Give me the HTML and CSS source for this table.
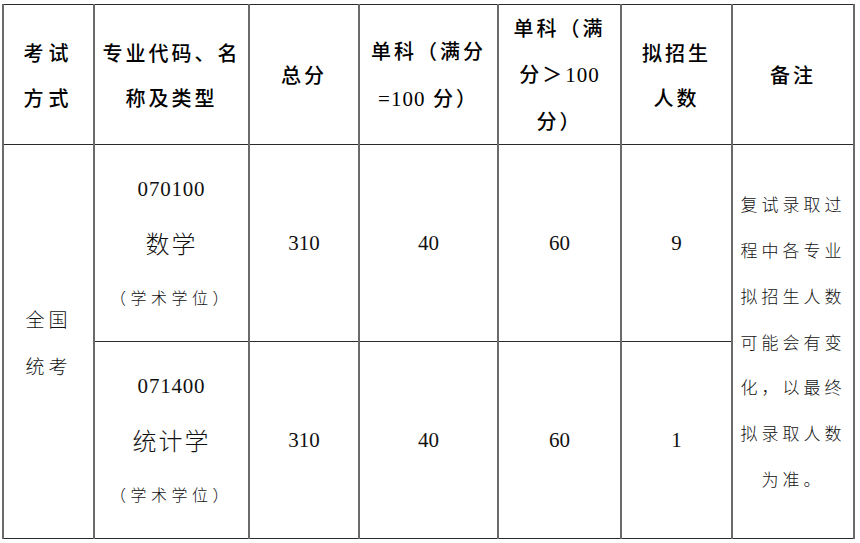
FILE: index.html
```html
<!DOCTYPE html>
<html lang="zh-CN">
<head>
<meta charset="utf-8">
<link rel="stylesheet" href="styles.css">
</head>
<body>
<table class="plan">
  <colgroup>
    <col class="c1"><col class="c2"><col class="c3"><col class="c4"><col class="c5"><col class="c6"><col class="c7">
  </colgroup>
  <thead>
    <tr class="head-row">
      <th class="h-wide">考试<br>方式</th>
      <th>专业代码、名<br>称及类型</th>
      <th>总分</th>
      <th class="h-single">单科（满分<br><span class="num">=100</span> 分）</th>
      <th class="h-three">单科（满<br>分＞<span class="num">100</span><br>分）</th>
      <th>拟招生<br>人数</th>
      <th>备注</th>
    </tr>
  </thead>
  <tbody>
    <tr class="body-row">
      <td rowspan="2" class="method">全国<br>统考</td>
      <td class="major">
        <div class="code">070100</div>
        <div class="name">数学</div>
        <div class="type">（学术学位）</div>
      </td>
      <td class="num-cell">310</td>
      <td class="num-cell">40</td>
      <td class="num-cell">60</td>
      <td class="num-cell">9</td>
      <td rowspan="2" class="note">复试录取过<br>程中各专业<br>拟招生人数<br>可能会有变<br>化，以最终<br>拟录取人数<br>为准。</td>
    </tr>
    <tr class="body-row">
      <td class="major">
        <div class="code">071400</div>
        <div class="name">统计学</div>
        <div class="type">（学术学位）</div>
      </td>
      <td class="num-cell">310</td>
      <td class="num-cell">40</td>
      <td class="num-cell">60</td>
      <td class="num-cell">1</td>
    </tr>
  </tbody>
</table>
</body>
</html>
```

FILE: styles.css
```css
html, body {
  margin: 0;
  padding: 0;
  background: #ffffff;
}

body {
  padding: 4px 0 0 2px;
  font-family: "Noto Sans CJK SC", "Liberation Serif", sans-serif;
  color: #111111;
}

.plan {
  border-collapse: collapse;
  table-layout: fixed;
  width: 851px;
}

.c1 { width: 91px; }
.c2 { width: 155px; }
.c3 { width: 110px; }
.c4 { width: 139px; }
.c5 { width: 123px; }
.c6 { width: 111px; }
.c7 { width: 122px; }

.plan th,
.plan td {
  padding: 0;
  text-align: center;
  vertical-align: middle;
  border-top: 1.5px solid #2a2a2a;
  border-bottom: 1.5px solid #2a2a2a;
  border-left: 2px solid #6a6a6a;
  border-right: 2px solid #6a6a6a;
}

.head-row { height: 136px; }
.body-row { height: 197px; }

.plan th {
  font-size: 20px;
  font-weight: 500;
  line-height: 45px;
  letter-spacing: 3px;
  color: #000000;
}

.plan th.h-wide { letter-spacing: 5px; }
.plan th.h-single { line-height: 47px; }
.plan th.h-three { line-height: 46px; }

.num {
  font-family: "Liberation Serif", serif;
  font-size: 21px;
  letter-spacing: 1px;
}

.method {
  font-size: 19px;
  font-weight: 300;
  line-height: 47px;
  letter-spacing: 4px;
}

.major {
  font-weight: 300;
}

.code {
  font-family: "Liberation Serif", serif;
  font-size: 21px;
  letter-spacing: 0.8px;
  line-height: 54px;
}

.name {
  font-size: 24px;
  letter-spacing: 2px;
  line-height: 54px;
}

.type {
  font-size: 16px;
  letter-spacing: 4.5px;
  line-height: 54px;
}

.num-cell {
  font-family: "Liberation Serif", serif;
  font-size: 21px;
}

.note {
  font-size: 17px;
  font-weight: 300;
  line-height: 45.8px;
  letter-spacing: 4px;
}
```
